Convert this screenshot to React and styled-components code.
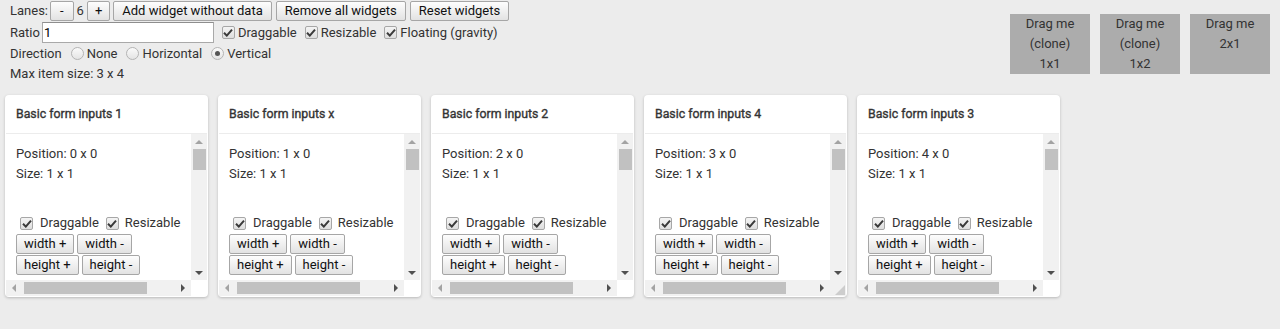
import React from "react";
import styled, { createGlobalStyle } from "styled-components";

const Global = createGlobalStyle`
  html, body { margin: 0; padding: 0; background: #ececec; }
  body { font-family: Roboto, "Liberation Sans", Arial, sans-serif; font-size: 13px; color: #333; }
  * { box-sizing: border-box; }
`;

const Top = styled.div`
  display: flex;
  justify-content: space-between;
  align-items: flex-start;
  padding: 0 10px;
`;

const Controls = styled.div`
  display: flex;
  flex-direction: column;
`;

const Row = styled.div`
  display: flex;
  align-items: center;
  height: ${(p) => p.$h || 20}px;
  white-space: nowrap;
  gap: ${(p) => p.$gap ?? 0}px;
`;

const Button = styled.button`
  font-family: Roboto, "Liberation Sans", Arial, sans-serif;
  font-size: 13px;
  color: #111;
  height: 20px;
  padding: 0 ${(p) => p.$pad ?? 8}px;
  margin: 0 0 0 ${(p) => p.$ml ?? 0}px;
  border: 1px solid #a6a6a6;
  border-radius: 2px;
  background: linear-gradient(#fdfdfd, #e2e2e2);
  line-height: 18px;
  cursor: default;
`;

const Label = styled.span`
  margin-left: ${(p) => p.$ml || 0}px;
  margin-right: ${(p) => p.$mr || 0}px;
`;

const TextInput = styled.input`
  width: 172px;
  height: 21px;
  margin-left: 2px;
  padding: 0 1px;
  border: 1px solid #a9a9a9;
  border-top-color: #8e8e8e;
  font-family: Roboto, "Liberation Sans", Arial, sans-serif;
  font-size: 13px;
  color: #000;
  background: #fff;
  outline: none;
`;

const CheckLabel = styled.label`
  display: inline-flex;
  align-items: center;
  margin-left: ${(p) => p.$ml || 0}px;
`;

const CheckBox = styled.span`
  display: inline-flex;
  align-items: center;
  justify-content: center;
  width: 13px;
  height: 13px;
  margin: 0 ${(p) => p.$mr ?? 3}px 0 4px;
  border: 1px solid #a7a7a7;
  border-radius: 2px;
  background: linear-gradient(#f4f4f4, #dedede);
`;

const RadioBox = styled.span`
  display: inline-flex;
  align-items: center;
  justify-content: center;
  width: 13px;
  height: 13px;
  margin: 0 3px 0 5px;
  border: 1px solid #b4b4b4;
  border-radius: 50%;
  background: linear-gradient(#fafafa, #e4e4e4);
`;

const RadioDot = styled.span`
  width: 5px;
  height: 5px;
  border-radius: 50%;
  background: #555;
`;

const Check = ({ children, ml, mr }) => (
  <CheckLabel $ml={ml}>
    <CheckBox $mr={mr}>
      <svg width="10" height="9" viewBox="0 0 10 9">
        <path d="M1 4.8 L3.8 7.6 L9 1.6" fill="none" stroke="#3a3a3a" strokeWidth="2" />
      </svg>
    </CheckBox>
    {children}
  </CheckLabel>
);

const Radio = ({ children, checked, ml }) => (
  <CheckLabel $ml={ml}>
    <RadioBox>{checked && <RadioDot />}</RadioBox>
    {children}
  </CheckLabel>
);

const DragArea = styled.div`
  display: flex;
  gap: 10px;
  margin-top: 14px;
`;

const DragBox = styled.div`
  width: 80px;
  height: 60px;
  background: #acacac;
  color: #333;
  text-align: center;
  line-height: 20px;
`;

const Grid = styled.div`
  display: grid;
  grid-template-columns: repeat(6, 203px);
  column-gap: 10px;
  padding: 5px;
  margin-top: 7px;
`;

const Card = styled.div`
  height: 202px;
  background: #fff;
  border-radius: 4px;
  box-shadow: 0 1px 3px rgba(0, 0, 0, 0.22);
  display: flex;
  flex-direction: column;
  padding: 0 1px 1px;
  overflow: hidden;
`;

const CardHeader = styled.div`
  height: 39px;
  flex: none;
  display: flex;
  align-items: center;
  padding: 0 0 1px 10px;
  font-size: 12.3px;
  font-weight: 400;
  -webkit-text-stroke: 0.35px #333;
  color: #333;
  border-bottom: 1px solid #ececec;
`;

const CardBody = styled.div`
  flex: 1;
  display: grid;
  grid-template-columns: 1fr 16px;
  grid-template-rows: 1fr 16px;
  min-height: 0;
`;

const Content = styled.div`
  overflow: hidden;
  padding: 10px 0 0 10px;
  min-width: 0;
  line-height: 20px;
  white-space: nowrap;
`;

const Line = styled.div`
  height: 20px;
`;

const CardChecks = styled.div`
  display: flex;
  align-items: center;
  height: 20px;
  margin-top: 29px;
`;

const ButtonRow = styled.div`
  display: flex;
  gap: 3px;
  margin-top: 1px;
`;

const VBar = styled.div`
  background: #f1f1f1;
  display: flex;
  flex-direction: column;
  align-items: center;
`;

const HBar = styled.div`
  background: #f1f1f1;
  display: flex;
  align-items: center;
`;

const ArrowCell = styled.div`
  width: 16px;
  height: 15px;
  flex: none;
  display: flex;
  align-items: center;
  justify-content: center;
`;

const Tri = styled.span`
  width: 0;
  height: 0;
  border-style: solid;
  border-color: transparent;
  ${(p) =>
    p.$dir === "up"
      ? `border-width: 0 4px 4px 4px; border-bottom-color: ${p.$c};`
      : p.$dir === "down"
      ? `border-width: 4px 4px 0 4px; border-top-color: ${p.$c};`
      : p.$dir === "left"
      ? `border-width: 4px 4px 4px 0; border-right-color: ${p.$c};`
      : `border-width: 4px 0 4px 4px; border-left-color: ${p.$c};`}
`;

const VThumb = styled.div`
  width: 13px;
  height: 21px;
  background: #c1c1c1;
`;

const HThumb = styled.div`
  height: 12px;
  width: 123px;
  margin-left: 2px;
  background: #c1c1c1;
`;

const Spacer = styled.div`
  flex: 1;
`;

const Corner = styled.div`
  background: ${(p) => (p.$resize ? "#f1f1f1" : "#fff")};
  display: flex;
  align-items: flex-end;
  justify-content: flex-end;
`;

const cards = [
  { title: "Basic form inputs 1", pos: "0 x 0" },
  { title: "Basic form inputs x", pos: "1 x 0" },
  { title: "Basic form inputs 2", pos: "2 x 0" },
  { title: "Basic form inputs 4", pos: "3 x 0", resize: true },
  { title: "Basic form inputs 3", pos: "4 x 0" },
];

const Widget = ({ title, pos, resize }) => (
  <Card>
    <CardHeader>{title}</CardHeader>
    <CardBody>
      <Content>
        <Line>Position: {pos}</Line>
        <Line>Size: 1 x 1</Line>
        <CardChecks>
          <Check mr={7}>Draggable</Check>
          <Check ml={3} mr={6}>Resizable</Check>
        </CardChecks>
        <ButtonRow>
          <Button $pad={7}>width +</Button>
          <Button $pad={7}>width -</Button>
        </ButtonRow>
        <ButtonRow>
          <Button $pad={7}>height +</Button>
          <Button $pad={7}>height -</Button>
        </ButtonRow>
      </Content>
      <VBar>
        <ArrowCell>
          <Tri $dir="up" $c="#a3a3a3" />
        </ArrowCell>
        <VThumb />
        <Spacer />
        <ArrowCell>
          <Tri $dir="down" $c="#505050" />
        </ArrowCell>
      </VBar>
      <HBar>
        <ArrowCell>
          <Tri $dir="left" $c="#a3a3a3" />
        </ArrowCell>
        <HThumb />
        <Spacer />
        <ArrowCell>
          <Tri $dir="right" $c="#505050" />
        </ArrowCell>
      </HBar>
      <Corner $resize={resize}>
        {resize && (
          <svg width="16" height="16" viewBox="0 0 16 16">
            <polygon points="15,5 15,15 5,15" fill="#cdcdcd" />
          </svg>
        )}
      </Corner>
    </CardBody>
  </Card>
);

export default function App() {
  return (
    <>
      <Global />
      <Top>
        <Controls>
          <Row $h={21} $gap={3}>
            <Label $mr={-1}>Lanes:</Label>
            <Button $pad={9}>-</Button>
            <Label>6</Label>
            <Button $pad={7}>+</Button>
            <Button>Add widget without data</Button>
            <Button $ml={1}>Remove all widgets</Button>
            <Button $ml={1}>Reset widgets</Button>
          </Row>
          <Row $h={22}>
            <Label>Ratio</Label>
            <TextInput defaultValue="1" />
            <Check ml={4}>Draggable</Check>
            <Check ml={4}>Resizable</Check>
            <Check ml={4}>Floating (gravity)</Check>
          </Row>
          <Row $h={20}>
            <Label>Direction</Label>
            <Radio ml={4}>None</Radio>
            <Radio ml={4}>Horizontal</Radio>
            <Radio ml={4} checked>
              Vertical
            </Radio>
          </Row>
          <Row $h={20}>
            <Label>Max item size: 3 x 4</Label>
          </Row>
        </Controls>
        <DragArea>
          <DragBox>
            Drag me
            <br />
            (clone)
            <br />
            1x1
          </DragBox>
          <DragBox>
            Drag me
            <br />
            (clone)
            <br />
            1x2
          </DragBox>
          <DragBox>
            Drag me
            <br />
            2x1
          </DragBox>
        </DragArea>
      </Top>
      <Grid>
        {cards.map((c) => (
          <Widget key={c.title} {...c} />
        ))}
      </Grid>
    </>
  );
}
